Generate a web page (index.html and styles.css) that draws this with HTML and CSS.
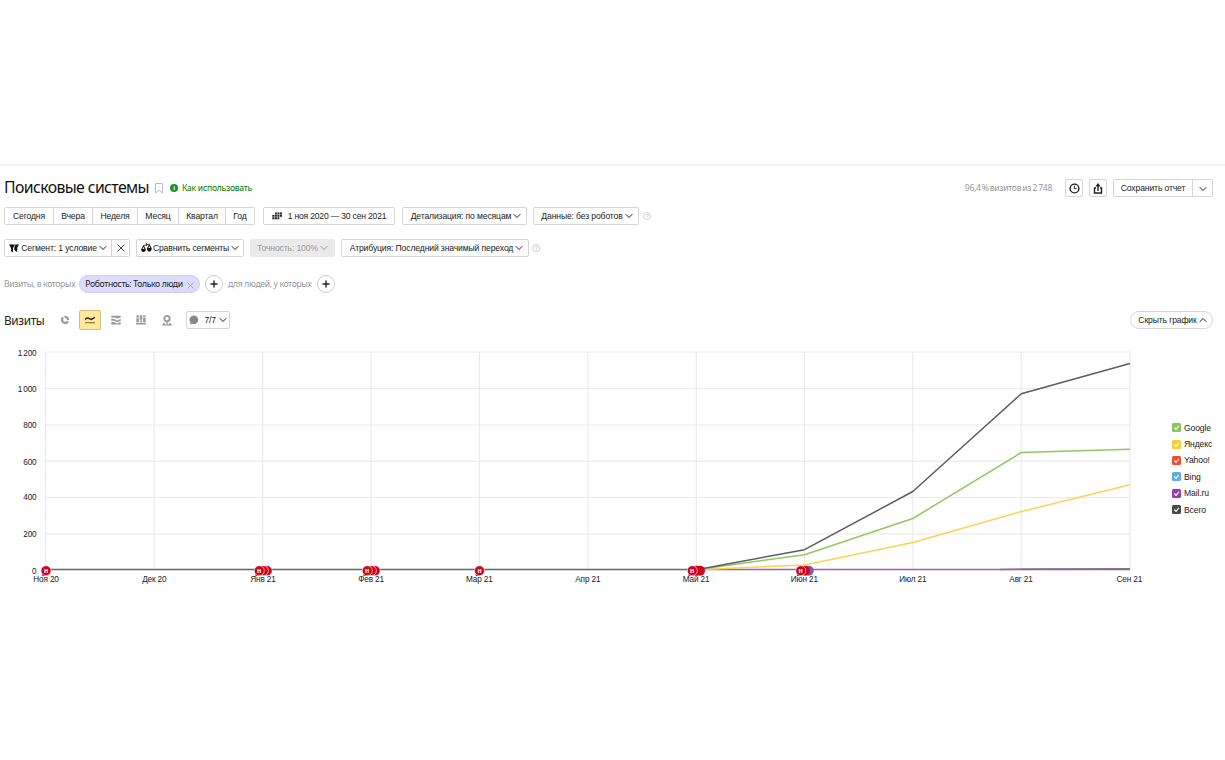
FILE: index.html
```html
<!DOCTYPE html>
<html lang="ru">
  <head>
    <meta charset="utf-8">
    <title>Поисковые системы</title>
    <link rel="stylesheet" href="styles.css">
  </head>
  <body>
    <svg class="defs" width="0" height="0">
      <symbol id="down" viewBox="0 0 8 6"><path d="M.7 1.2 4 4.5 7.3 1.2" fill="none" stroke="currentColor" stroke-width="1" /></symbol>
      <symbol id="check" viewBox="0 0 9 9"><path d="M2.3 4.5 4 6.3 6.9 2.8" fill="none" stroke="#fff" stroke-width="1.1" /></symbol>
    </svg>

    <main class="report">
      <header class="head">
        <h1 class="title">Поисковые системы</h1>
        <svg class="bookmark" viewBox="0 0 8 11"><path d="M.5.5h7v9.6L4 7.3.5 10.1z" fill="none" stroke="#bbb" /></svg>
        <span class="info">i</span>
        <a class="howto">Как использовать</a>
        <span class="visits">96,4 % визитов из 2 748</span>
        <button class="btn square">
          <svg width="11" height="11" viewBox="0 0 11 11"><circle cx="5.5" cy="5.5" r="4.4" fill="none" stroke="#222" stroke-width="1.4" /><path d="M5.4 2.7v3h2.3" fill="none" stroke="#222" /></svg>
        </button>
        <button class="btn square">
          <svg width="10" height="11" viewBox="0 0 10 11"><path d="M3 5H1.5v5h7V5H7M5 8V2" fill="none" stroke="#222" stroke-width="1.4" /><path d="M5 0 2.4 3.5h5.2z" fill="#222" /></svg>
        </button>
        <div class="group save">
          <button class="seg save-main">Сохранить отчет</button>
          <button class="seg save-more"><svg class="arrow"><use href="#down" /></svg></button>
        </div>
      </header>

      <div class="row periods">
        <div class="group">
          <button class="seg w49">Сегодня</button>
          <button class="seg w39">Вчера</button>
          <button class="seg w45">Неделя</button>
          <button class="seg w41">Месяц</button>
          <button class="seg w47">Квартал</button>
          <button class="seg w30">Год</button>
        </div>
        <button class="btn date">
          <svg width="10" height="8" viewBox="0 0 10 8"><path d="M3 .5h1.9v1.9H3zM5.4.5h1.9v1.9H5.4zM7.8.5H10v1.9H7.8zM.3 2.9h2.2v1.9H.3zM3 2.9h1.9v1.9H3zM5.4 2.9h1.9v1.9H5.4zM7.8 2.9H10v1.9H7.8zM.3 5.3h2.2v2H.3zM3 5.3h1.9v2H3zM5.4 5.3h1.9v2H5.4z" fill="#222" /></svg>
          <span>1 ноя 2020 — 30 сен 2021</span>
        </button>
        <button class="btn detail"><span>Детализация: по месяцам</span><svg class="arrow"><use href="#down" /></svg></button>
        <button class="btn data"><span>Данные: без роботов</span><svg class="arrow"><use href="#down" /></svg></button>
        <span class="help">?</span>
      </div>

      <div class="row segments">
        <div class="group">
          <button class="seg segment">
            <svg width="10" height="9" viewBox="0 0 10 9"><path d="M0 .5h6L4 4v4.5L2 7V4zM6.4.5H10L8.2 3.8V8L6 6.8 5.2 5V4z" fill="#111" /></svg>
            <span>Сегмент: 1 условие</span><svg class="arrow"><use href="#down" /></svg>
          </button>
          <button class="seg clear"><svg width="8" height="8" viewBox="0 0 8 8"><path d="m.6.6 6.8 6.8m0-6.8L.6 7.4" stroke="#444" /></svg></button>
        </div>
        <button class="btn compare">
          <svg width="11" height="10" viewBox="0 0 11 10"><path d="M2.5 2.6 8.3 1M5.4.2v3" stroke="#111" fill="none" stroke-width=".8" /><path d="M2.5 2 .2 6.2C.2 8 1 9 2.5 9s2.3-1 2.3-2.8zM8.3.8 6 5.2C6 7.6 6.8 8.6 8.3 8.6s2.4-1 2.4-3.4z" fill="#111" /><path d="M2.5 3.8 1.6 6h1.8zM8.3 2.7 7.4 5h1.8z" fill="#fff" /></svg>
          <span>Сравнить сегменты</span><svg class="arrow"><use href="#down" /></svg>
        </button>
        <button class="btn accuracy"><span>Точность: 100%</span><svg class="arrow"><use href="#down" /></svg></button>
        <button class="btn attribution"><span>Атрибуция: Последний значимый переход</span><svg class="arrow"><use href="#down" /></svg></button>
        <span class="help">?</span>
      </div>

      <div class="row filters">
        <span class="hint hint-visits">Визиты, в которых</span>
        <span class="chip"><span>Роботность: Только люди</span><svg width="7" height="7" viewBox="0 0 7 7"><path d="m.5.5 6 6m0-6-6 6" stroke="#9a99b8" stroke-width=".8" /></svg></span>
        <button class="plus"><svg width="8" height="8" viewBox="0 0 8 8"><path d="M4 .5v7M.5 4h7" stroke="#222" stroke-width="1.4" /></svg></button>
        <span class="hint hint-people">для людей, у которых</span>
        <button class="plus"><svg width="8" height="8" viewBox="0 0 8 8"><path d="M4 .5v7M.5 4h7" stroke="#222" stroke-width="1.4" /></svg></button>
      </div>

      <div class="row toolbar">
        <h2 class="metric">Визиты</h2>
        <div class="views">
          <button class="view"><svg width="10" height="10" viewBox="0 0 10 10"><path d="M3.1 2.3A3.2 3.2 0 1 0 7.9 6.4" fill="none" stroke="#999" stroke-width="2.3" /><path d="M4.4.8A4.2 4.2 0 0 1 9.2 5.2L6.9 5A2 2 0 0 0 4.6 3z" fill="#999" /></svg></button>
          <button class="view active"><svg width="10" height="8" viewBox="0 0 10 8"><path d="M0 3.4 1.6 2.2 3 2l3.2 1.4L9.8 1.4" fill="none" stroke="#332c18" stroke-width="1.5" /><path d="M0 6.7h10" stroke="#8e7740" stroke-width="1.2" /></svg></button>
          <button class="view"><svg width="10" height="10" viewBox="0 0 10 10"><path d="M.3.8h9.4v1.7L6.5 3.6 3.5 2.5H.3zM.3 3.7h2.4l3.5 1.8 3.5-1.6v1.8L6.3 7.2 3 5.7H.3zM.3 6.9h2.2l3.6 1.5 3.6-1.3v2.5H.3z" fill="#999" /></svg></button>
          <button class="view"><svg width="10" height="10" viewBox="0 0 10 10"><path d="M1.6.3v2.2m0 .7v4M5 .3v4.5m0 .7v1.7M8.4.3v1.5m0 .7v4.7" fill="none" stroke="#999" stroke-width="2.5" /><path d="M0 8.7h10" stroke="#999" stroke-width="1.6" /></svg></button>
          <button class="view"><svg width="10" height="11" viewBox="0 0 10 11"><circle cx="5" cy="3.6" r="2.7" fill="none" stroke="#999" stroke-width="1.8" /><path d="M5 6v3M2.6 8 1.2 9.9h7.6L7.4 8" fill="none" stroke="#999" stroke-width="1.4" /></svg></button>
        </div>
        <button class="btn notes">
          <svg width="10" height="10" viewBox="0 0 10 10"><path d="M5 .5a4.4 4.3 0 1 1-2 8.2L1 9.8l.5-2.3A4.4 4.3 0 0 1 5 .5z" fill="#888" /></svg>
          <span>7/7</span><svg class="arrow"><use href="#down" /></svg>
        </button>
        <button class="btn hide"><span>Скрыть график</span><svg class="arrow up"><use href="#down" /></svg></button>
      </div>

      <section class="chart">
        <svg class="plot" width="1150" height="250" viewBox="0 340 1150 250">
          <path class="grid" d="M45.5 352H1130M45.5 388.5H1130M45.5 425H1130M45.5 461.2H1130M45.5 497.5H1130M45.5 533.8H1130" />
          <path class="grid" d="M45.7 352v218M154.1 352v218M262.6 352v218M371 352v218M479.4 352v218M587.8 352v218M696.3 352v218M804.5 352v218M912.8 352v218M1021.3 352v218M1130 352v218" />
          <g class="ticks y">
            <text x="36.5" y="356">1 200</text>
            <text x="36.5" y="391.5">1 000</text>
            <text x="36.5" y="428.3">800</text>
            <text x="36.5" y="464.5">600</text>
            <text x="36.5" y="500.3">400</text>
            <text x="36.5" y="537">200</text>
            <text x="36.5" y="573.5">0</text>
          </g>
          <g class="ticks x">
            <text x="46" y="582">Ноя 20</text>
            <text x="154.3" y="582">Дек 20</text>
            <text x="263" y="582">Янв 21</text>
            <text x="371" y="582">Фев 21</text>
            <text x="479.3" y="582">Мар 21</text>
            <text x="587.8" y="582">Апр 21</text>
            <text x="696" y="582">Май 21</text>
            <text x="804.3" y="582">Июн 21</text>
            <text x="912.8" y="582">Июл 21</text>
            <text x="1021" y="582">Авг 21</text>
            <text x="1129.3" y="582">Сен 21</text>
          </g>
          <g class="lines">
            <path stroke="#66666a" d="M45.7 569.6H700" />
            <path stroke="#6c6c6c" d="M1000 569.4 1130 568.9" />
            <path stroke="#a35bb5" d="M700 569.6H1130" />
            <path stroke="#6c6c6c" stroke-width="1" d="M1021 569.3 1130 569" />
            <path stroke="#ffd24d" d="M696.3 569.7 804.5 565 912.8 542.5 1021.3 511.5 1130 484.7" />
            <path stroke="#8fc85f" d="M696.3 569.7 804.5 554.7 912.8 518.5 1021.3 452.5 1130 449.3" />
            <path stroke="#5c5c60" d="M696.3 569.7 804.5 549.7 912.8 491.5 1021.3 393.8 1130 363.5" />
          </g>
          <g class="marks">
            <g><path d="m42 573 .3 3.3 4-.8z" /><circle cx="46" cy="570.7" r="5" /><text x="46" y="573">н</text></g>
            <g><circle cx="267.2" cy="570.7" r="5" /><circle cx="263.4" cy="570.7" r="5" /><path d="m255.3 573 .3 3.3 4-.8z" /><circle cx="259.3" cy="570.7" r="5" /><text x="259" y="573">н</text></g>
            <g><circle cx="375.2" cy="570.7" r="5" /><circle cx="371.4" cy="570.7" r="5" /><path d="m363.3 573 .3 3.3 4-.8z" /><circle cx="367.3" cy="570.7" r="5" /><text x="367" y="573">н</text></g>
            <g><path d="m475.5 573 .3 3.3 4-.8z" /><circle cx="479.5" cy="570.7" r="5" /><text x="479.5" y="573">н</text></g>
            <g><circle class="plain" cx="700" cy="570.7" r="5" /><circle class="plain" cx="696.5" cy="570.7" r="5" /><path d="m688.3 573 .3 3.3 4-.8z" /><circle cx="692.3" cy="570.7" r="5" /><text x="692" y="573">н</text></g>
            <g><circle class="plain violet" cx="808.8" cy="570.7" r="5" /><circle class="plain" cx="805" cy="570.7" r="5" /><path d="m796.8 573 .3 3.3 4-.8z" /><circle cx="800.8" cy="570.7" r="5" /><text x="800.5" y="573">н</text></g>
          </g>
        </svg>
        <ul class="legend">
          <li><svg class="box google"><use href="#check" /></svg>Google</li>
          <li><svg class="box yandex"><use href="#check" /></svg>Яндекс</li>
          <li><svg class="box yahoo"><use href="#check" /></svg>Yahoo!</li>
          <li><svg class="box bing"><use href="#check" /></svg>Bing</li>
          <li><svg class="box mail"><use href="#check" /></svg>Mail.ru</li>
          <li><svg class="box total"><use href="#check" /></svg>Всего</li>
        </ul>
      </section>
    </main>
  </body>
</html>
```
FILE: styles.css
```css
* {
  box-sizing: border-box;
}

body {
  margin: 0;
  padding-top: 164px;
  background: #fff;
  color: #222;
  font-family: "Liberation Sans", Arial, sans-serif;
  font-size: 8.6px;
  letter-spacing: -0.13px;
}

button {
  padding: 0;
  font: inherit;
  letter-spacing: inherit;
  color: inherit;
  background: #fff;
  border: none;
}

svg {
  flex: none;
}

.defs {
  display: block;
}

.report {
  border-top: 2px solid #f3f3f3;
  padding: 12px 12px 0 4px;
}

.head,
.row {
  display: flex;
  align-items: center;
  white-space: nowrap;
}

.head {
  height: 20px;
}

.title {
  width: 146px;
  margin: 0 5px 2px 0;
  font: 400 15.8px "Noto Sans", sans-serif;
  letter-spacing: -0.6px;
  color: #111;
}

.bookmark {
  width: 8px;
  height: 11px;
  margin: 1px 7px 0 0;
}

.info {
  width: 8px;
  height: 8px;
  margin-right: 4px;
  border-radius: 50%;
  background: #159135;
  color: #fff;
  font: bold 6px/8px "Liberation Serif", serif;
  text-align: center;
}

.howto {
  color: #007a00;
  font: 8.6px "Noto Sans", sans-serif;
  letter-spacing: -0.25px;
}

.visits {
  margin: 0 13px 0 auto;
  color: #999;
  font: 8.6px "Noto Sans", sans-serif;
  letter-spacing: -0.3px;
  word-spacing: -0.8px;
}

.btn,
.group {
  display: flex;
  align-items: center;
  height: 18px;
  border: 1px solid #d6d6d6;
  border-radius: 2px;
}

.btn {
  justify-content: center;
}

.square {
  width: 18px;
  margin-right: 6px;
}

.seg {
  display: flex;
  align-items: center;
  justify-content: center;
  height: 16px;
}

.seg + .seg {
  border-left: 1px solid #d6d6d6;
}

.arrow {
  width: 8px;
  height: 6px;
  margin-left: 2px;
}

.up {
  transform: rotate(180deg);
}

.save-main {
  width: 78px;
}

.save-more {
  width: 20px;
}

.save-more .arrow {
  margin: 1px 0 0;
}

.periods {
  margin-top: 8px;
  height: 20px;
}

.w49 { width: 48px; }
.w39 { width: 39px; }
.w45 { width: 45px; }
.w41 { width: 41px; }
.w47 { width: 47px; }
.w30 { width: 29px; }

.date {
  width: 132px;
  margin-left: 8px;
  letter-spacing: -0.2px;
}

.date svg {
  margin-right: 6px;
}

.detail {
  width: 125px;
  padding-left: 3px;
  margin-left: 7px;
}

.data {
  width: 106px;
  padding-left: 2px;
  margin-left: 6px;
}

.help {
  width: 8px;
  height: 8px;
  margin-left: 4px;
  border: 1px solid #d0d0d0;
  border-radius: 50%;
  color: #bbb;
  font-size: 6px;
  line-height: 6px;
  text-align: center;
}

.segments {
  margin-top: 12px;
  height: 20px;
}

.segment {
  width: 106px;
}

.segment > svg:first-child {
  margin-right: 2px;
}

.clear {
  width: 18px;
}

.compare {
  width: 108px;
  margin-left: 6px;
}

.compare > svg:first-child {
  margin-right: 1px;
}

.accuracy {
  width: 85px;
  margin-left: 6px;
  background: #eaeaea;
  border-color: #eaeaea;
  color: #999;
}

.attribution {
  width: 188px;
  padding-left: 3px;
  margin-left: 6px;
}

.segments .help {
  margin-left: 3px;
}

.filters {
  margin-top: 16px;
  height: 20px;
  font-family: "Noto Sans", sans-serif;
  letter-spacing: -0.35px;
}

.hint {
  margin-bottom: 1px;
  color: #999;
}

.hint-visits {
  width: 75px;
}

.chip {
  display: flex;
  align-items: center;
  justify-content: center;
  gap: 4px;
  width: 121px;
  height: 18px;
  border: 1px solid #ccccf0;
  border-radius: 9px;
  background: #dcdcfd;
}

.chip svg {
  margin-top: 2px;
}

.plus {
  display: flex;
  align-items: center;
  justify-content: center;
  width: 18px;
  height: 18px;
  margin-left: 5px;
  border: 1px solid #ccc;
  border-radius: 50%;
}

.hint-people {
  width: 84px;
  margin-left: 5px;
}

.toolbar {
  margin-top: 16px;
  height: 20px;
}

.metric {
  width: 50px;
  margin: 0 0 1px;
  font: 400 11.8px "Noto Sans", sans-serif;
  letter-spacing: -0.35px;
}

.views {
  display: flex;
  gap: 4.3px;
}

.view {
  display: flex;
  align-items: center;
  justify-content: center;
  width: 21px;
  height: 20px;
}

.active {
  width: 22px;
  border: 1px solid #d9bd72;
  border-radius: 2px;
  background: #ffe8a0;
}

.notes {
  width: 44px;
  margin-left: 9px;
}

.notes span {
  margin: 0 1px 0 5px;
}

.hide {
  width: 83px;
  padding-left: 2px;
  margin-left: auto;
  border-radius: 9px;
}

.chart {
  display: flex;
  margin: 10px 0 0 -4px;
}

.plot {
  display: block;
}

.grid {
  fill: none;
  stroke: #ebebeb;
  stroke-width: 1.2;
}

.ticks {
  font-size: 8.2px;
  fill: #222;
}

.y {
  text-anchor: end;
  word-spacing: -1.2px;
}

.x {
  text-anchor: middle;
}

.lines {
  fill: none;
  stroke-width: 1.5;
  stroke-linejoin: round;
}

.marks circle {
  fill: #d0021b;
  stroke: #fff;
  stroke-width: 0.6;
}

.marks path {
  fill: #d0021b;
}

.marks .plain {
  stroke: none;
}

.marks .violet {
  fill: #7a5bb5;
}

.marks text {
  fill: #fff;
  font-size: 7px;
  font-weight: bold;
  text-anchor: middle;
}

.legend {
  margin: 79.5px 0 0 22px;
  padding: 0;
  list-style: none;
}

.legend li {
  display: flex;
  align-items: center;
  height: 16.4px;
}

.box {
  width: 9px;
  height: 9px;
  margin-right: 3px;
  border-radius: 1.5px;
}

.google { background: #87c556; }
.yandex { background: #ffcc35; }
.yahoo { background: #fb4b2f; }
.bing { background: #60aadf; }
.mail { background: #963fab; }
.total { background: #49494d; }
```
